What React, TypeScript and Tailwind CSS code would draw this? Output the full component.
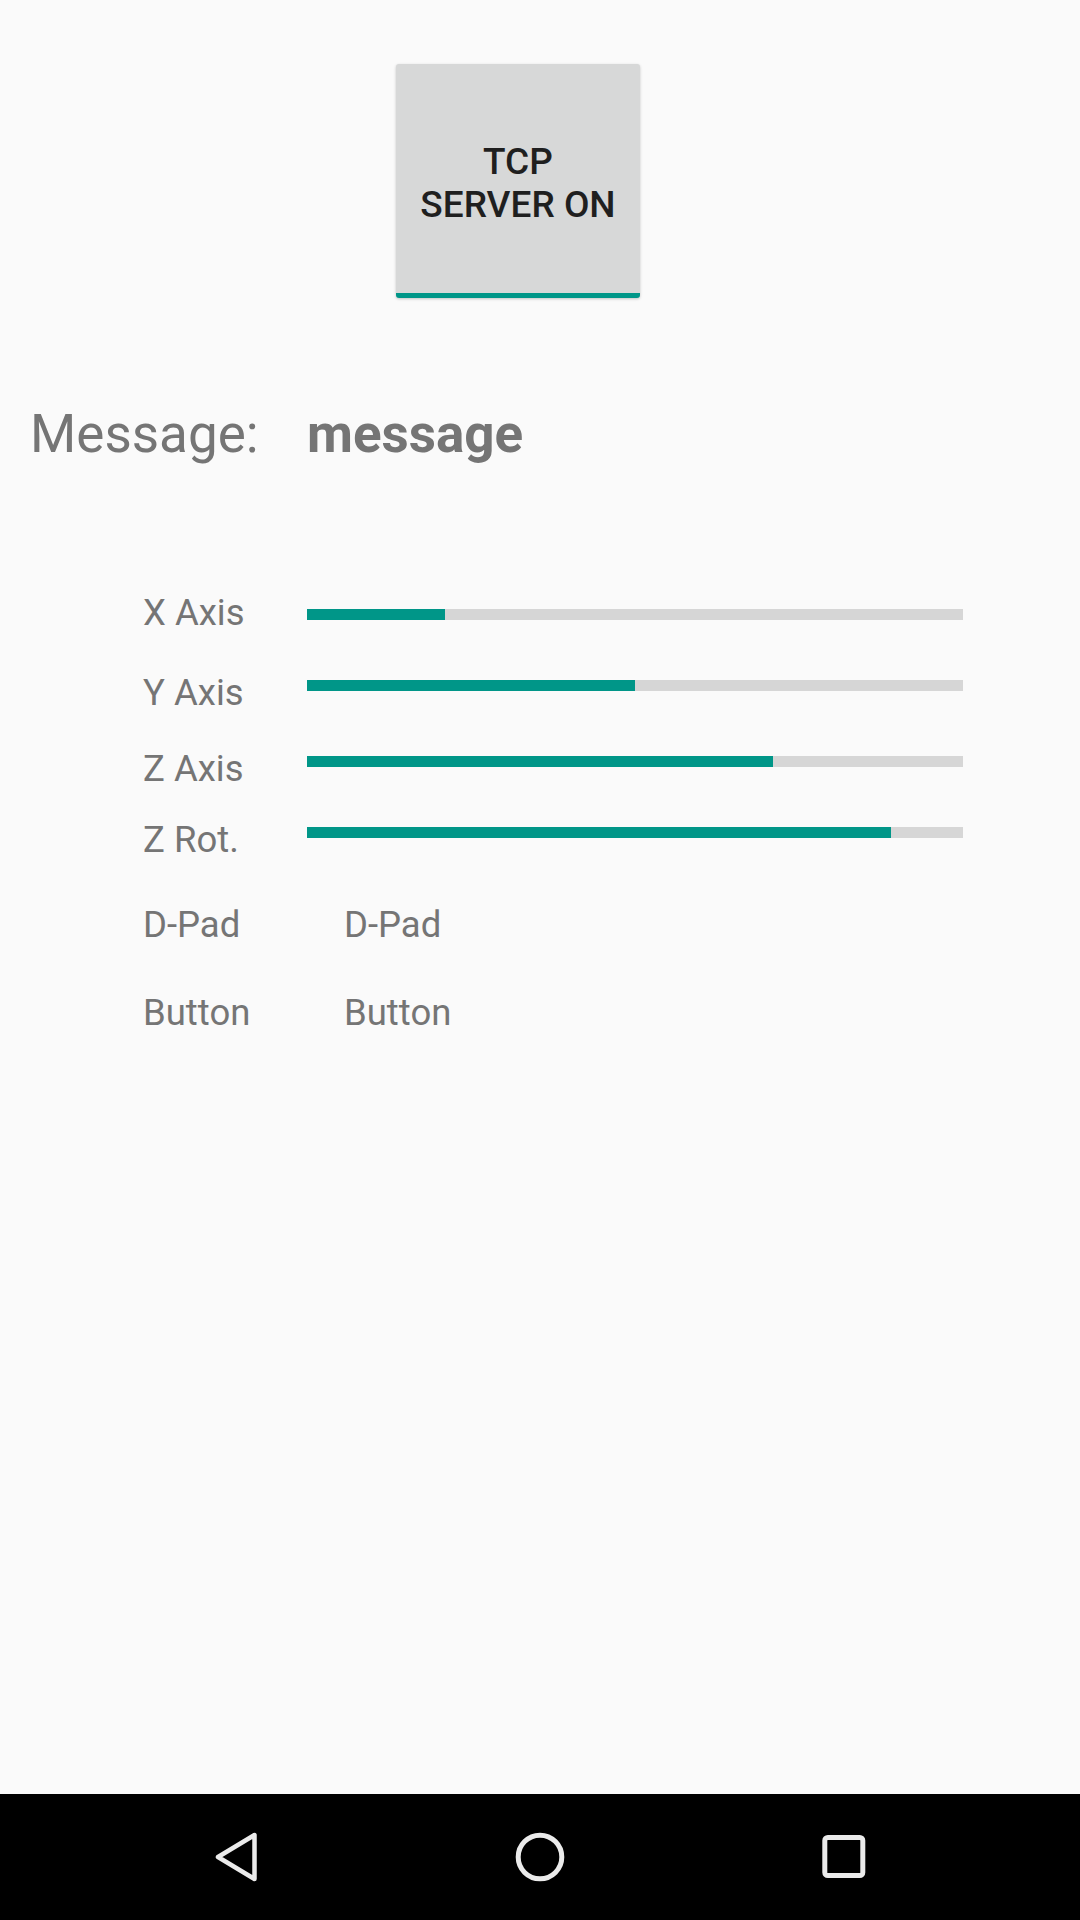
import React from "react";

const axes = [
  { label: "X Axis", pct: 21, mt: "mt-[126px]", barTop: "mt-[18px]" },
  { label: "Y Axis", pct: 50, mt: "mt-[37px]", barTop: "mt-[9px]" },
  { label: "Z Axis", pct: 71, mt: "mt-[33px]", barTop: "mt-[9px]" },
  { label: "Z Rot.", pct: 89, mt: "mt-[28px]", barTop: "mt-[9px]" },
];

function AxisRow({ label, pct, mt, barTop }: { label: string; pct: number; mt: string; barTop: string }) {
  return (
    <div className={`flex ${mt}`}>
      <div className="w-[164px] text-[36.5px] leading-[43px] text-[#757575]">{label}</div>
      <div className={`${barTop} h-[11px] w-[656px] bg-[#d6d6d6]`}>
        <div className="h-full bg-[#009688]" style={{ width: `${pct}%` }} />
      </div>
    </div>
  );
}

function NavBar() {
  return (
    <div className="flex h-[126px] items-center justify-center gap-[244px] bg-black">
      <svg width="60" height="60" viewBox="0 0 60 60">
        <path
          d="M12 30 L48.5 8 L48.5 52 Z"
          fill="none"
          stroke="#ebebeb"
          strokeWidth="4.5"
          strokeLinejoin="round"
        />
      </svg>
      <svg width="60" height="60" viewBox="0 0 60 60">
        <circle cx="30" cy="30" r="21.8" fill="none" stroke="#ebebeb" strokeWidth="5" />
      </svg>
      <svg width="60" height="60" viewBox="0 0 60 60">
        <rect x="10.8" y="10.5" width="38" height="38" rx="3" fill="none" stroke="#ebebeb" strokeWidth="5" />
      </svg>
    </div>
  );
}

export default function App() {
  return (
    <main className="flex h-[1920px] w-[1080px] flex-col bg-[#fafafa] font-['Roboto',sans-serif]">
      <div className="flex-1">
        <div className="ml-[396px] mt-[64px] flex h-[234px] w-[244px] flex-col overflow-hidden rounded-[3px] bg-[#d7d8d8] shadow-[0_1px_3px_rgba(0,0,0,0.22)]">
          <div className="flex flex-1 items-center justify-center pt-[8px] text-center text-[37px] font-medium leading-[43px] text-[#1f1f1f]">
            TCP
            <br />
            SERVER ON
          </div>
          <div className="h-[5px] bg-[#009688]" />
        </div>

        <div className="mt-[105px] flex items-baseline text-[53px] leading-[62px] text-[#757575]">
          <span className="w-[307px] pl-[30px]">Message:</span>
          <span className="font-bold">message</span>
        </div>

        <div className="pl-[143px]">
          {axes.map((a) => (
            <AxisRow key={a.label} {...a} />
          ))}

          <div className="mt-[42px] flex text-[36.5px] leading-[43px] text-[#757575]">
            <span className="w-[201px]">D-Pad</span>
            <span>D-Pad</span>
          </div>
          <div className="mt-[45px] flex text-[36.5px] leading-[43px] text-[#757575]">
            <span className="w-[201px]">Button</span>
            <span>Button</span>
          </div>
        </div>
      </div>
      <NavBar />
    </main>
  );
}
